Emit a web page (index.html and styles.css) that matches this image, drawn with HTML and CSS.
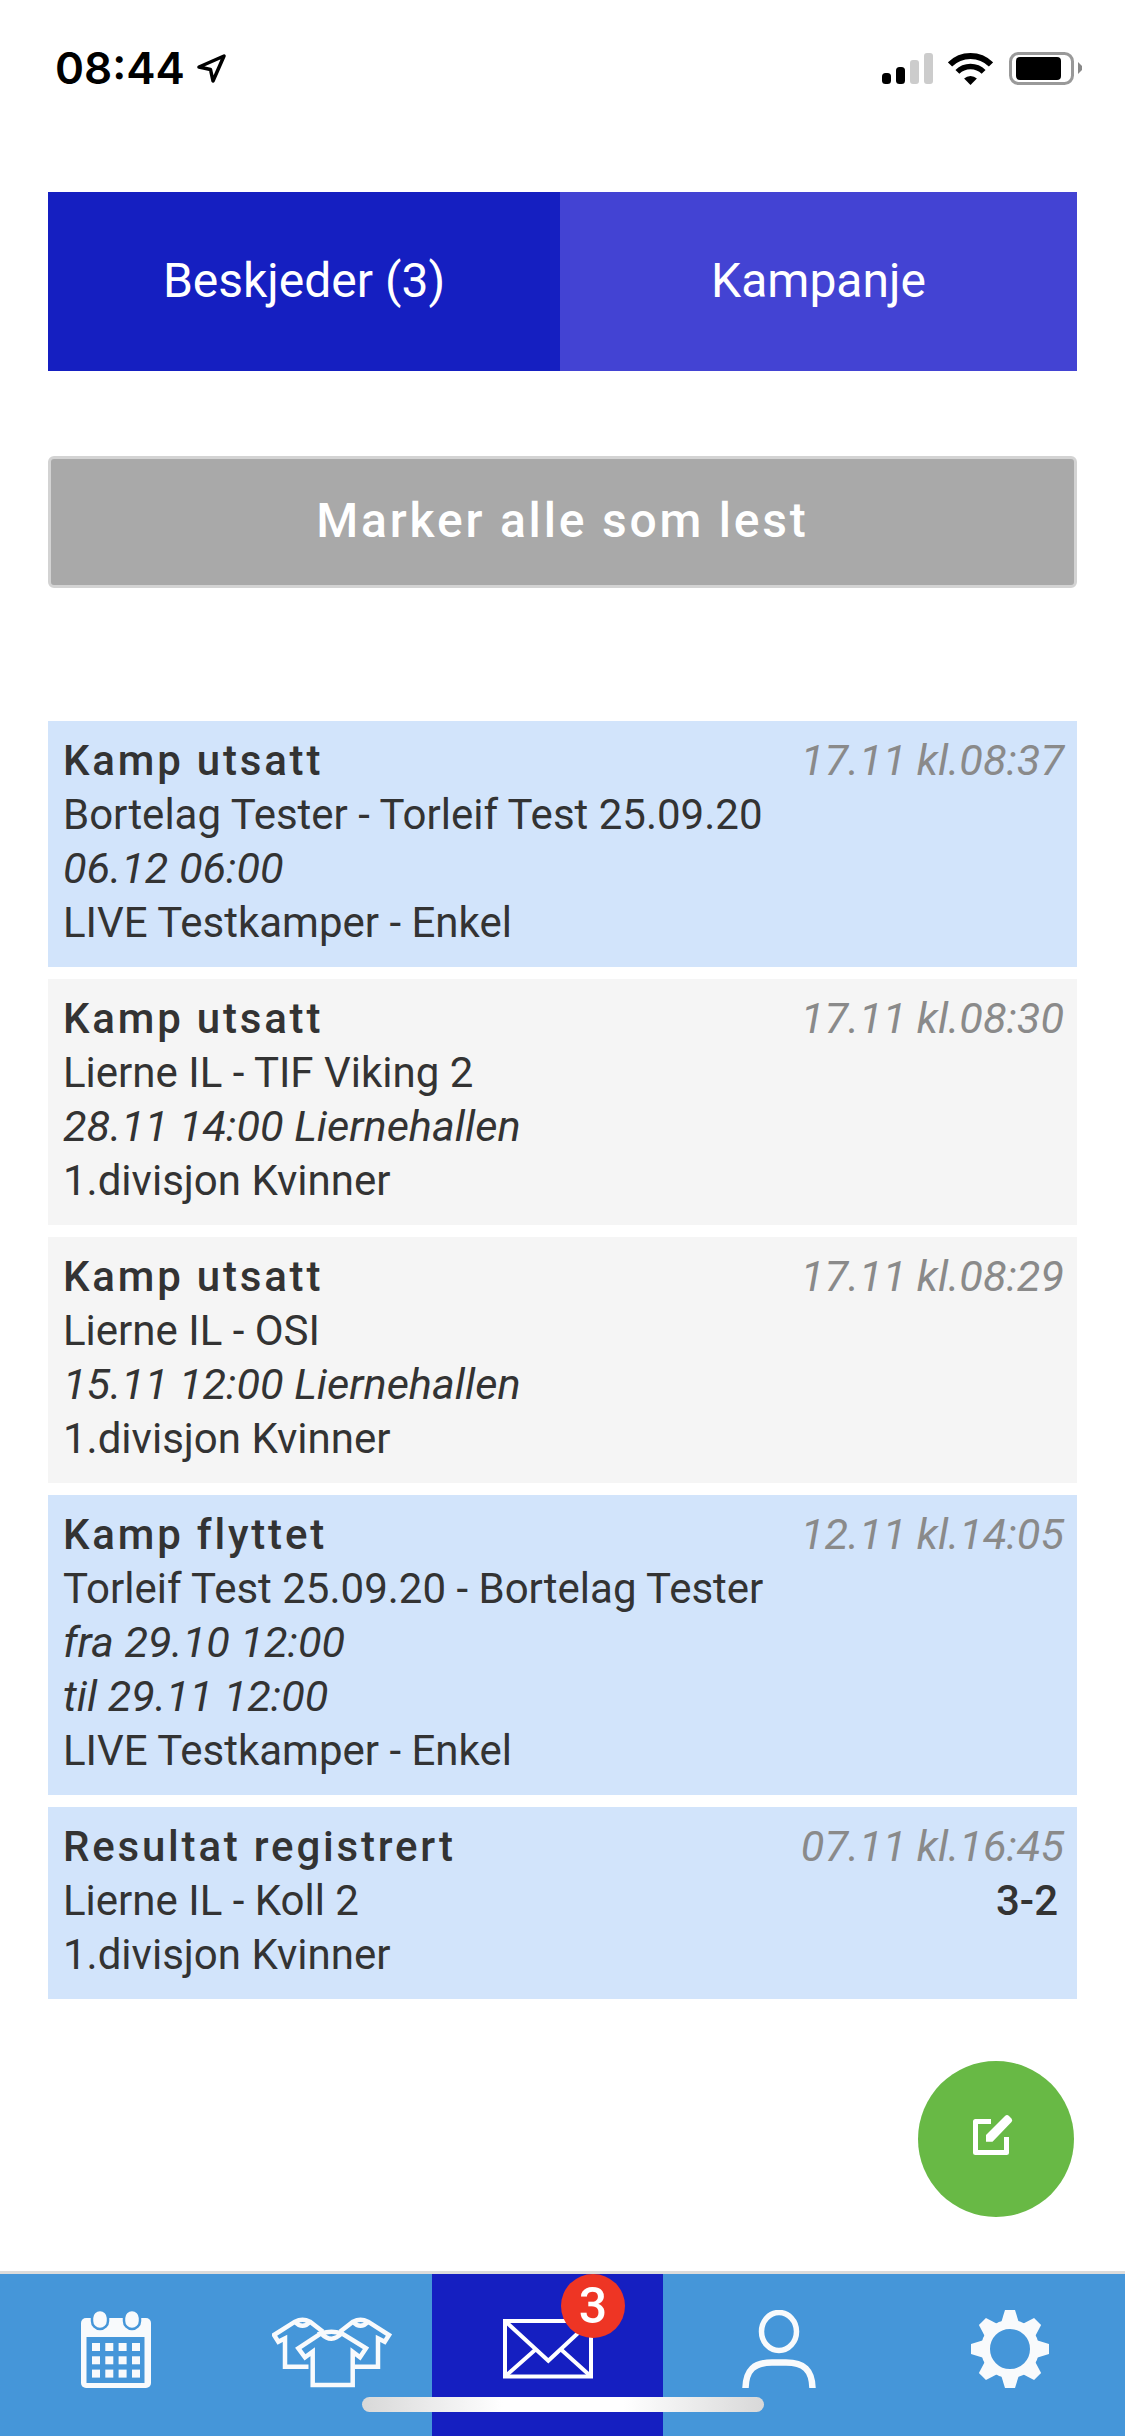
FILE: index.html
```html
<!DOCTYPE html>
<html lang="no">
<head>
    <meta charset="UTF-8">
    <meta name="viewport" content="width=device-width, initial-scale=1.0">
    <title>Beskjeder</title>
    <link rel="stylesheet" href="styles.css">
</head>
<body>
    <div class="statusbar">
        <span class="clock">08:44</span>
        <svg class="loc-arrow" width="29" height="29" viewBox="0 0 29 29">
            <path d="M2 13 L27 2 L16 27 L13.5 15.5 Z" fill="none" stroke="#000" stroke-width="3.5" stroke-linejoin="round"/>
        </svg>
        <svg class="signal" width="51" height="31" viewBox="0 0 51 31">
            <rect x="0" y="20" width="9" height="11" rx="3.5" fill="#000"/>
            <rect x="14" y="14" width="9" height="17" rx="3.5" fill="#000"/>
            <rect x="28" y="7" width="9" height="24" rx="3" fill="#ccc"/>
            <rect x="42" y="0" width="9" height="31" rx="3" fill="#ccc"/>
        </svg>
        <svg class="wifi" width="45" height="32" viewBox="0 0 45 32">
            <path d="M2 11.5 A29 29 0 0 1 43 11.5" fill="none" stroke="#000" stroke-width="6"/>
            <path d="M9.4 18.9 A18.5 18.5 0 0 1 35.6 18.9" fill="none" stroke="#000" stroke-width="5.5"/>
            <path d="M22.5 32 L16.1 25.6 A9 9 0 0 1 28.9 25.6 Z" fill="#000"/>
        </svg>
        <svg class="battery" width="73" height="33" viewBox="0 0 73 33">
            <rect x="1.5" y="1.5" width="62" height="30" rx="8" fill="none" stroke="#999" stroke-width="3"/>
            <rect x="7" y="5" width="45" height="23" rx="4" fill="#000"/>
            <path d="M69 10 L73 14 V18 L69 22 Z" fill="#888"/>
        </svg>
    </div>

    <div class="content">
        <div class="tabs">
            <div class="tab tab-active">Beskjeder (3)</div>
            <div class="tab">Kampanje</div>
        </div>

        <button class="mark-read">Marker alle som lest</button>

        <div class="messages">
            <div class="msg msg-unread">
                <div class="msg-text">
                    <div class="msg-title">Kamp utsatt</div>
                    <div>Bortelag Tester - Torleif Test 25.09.20</div>
                    <div class="msg-when">06.12 06:00</div>
                    <div>LIVE Testkamper - Enkel</div>
                </div>
                <div class="msg-side"><div class="msg-time">17.11 kl.08:37</div></div>
            </div>
            <div class="msg">
                <div class="msg-text">
                    <div class="msg-title">Kamp utsatt</div>
                    <div>Lierne IL - TIF Viking 2</div>
                    <div class="msg-when">28.11 14:00 Liernehallen</div>
                    <div>1.divisjon Kvinner</div>
                </div>
                <div class="msg-side"><div class="msg-time">17.11 kl.08:30</div></div>
            </div>
            <div class="msg">
                <div class="msg-text">
                    <div class="msg-title">Kamp utsatt</div>
                    <div>Lierne IL - OSI</div>
                    <div class="msg-when">15.11 12:00 Liernehallen</div>
                    <div>1.divisjon Kvinner</div>
                </div>
                <div class="msg-side"><div class="msg-time">17.11 kl.08:29</div></div>
            </div>
            <div class="msg msg-unread">
                <div class="msg-text">
                    <div class="msg-title">Kamp flyttet</div>
                    <div>Torleif Test 25.09.20 - Bortelag Tester</div>
                    <div class="msg-when">fra 29.10 12:00</div>
                    <div class="msg-when">til 29.11 12:00</div>
                    <div>LIVE Testkamper - Enkel</div>
                </div>
                <div class="msg-side"><div class="msg-time">12.11 kl.14:05</div></div>
            </div>
            <div class="msg msg-unread">
                <div class="msg-text">
                    <div class="msg-title">Resultat registrert</div>
                    <div>Lierne IL - Koll 2</div>
                    <div>1.divisjon Kvinner</div>
                </div>
                <div class="msg-side">
                    <div class="msg-time">07.11 kl.16:45</div>
                    <div class="msg-score">3-2</div>
                </div>
            </div>
        </div>
    </div>

    <div class="fab">
        <svg width="42" height="44" viewBox="0 0 42 44">
            <path d="M18 8.5 H2.5 V39.5 H33.5 V24" fill="none" stroke="#fff" stroke-width="5" stroke-linejoin="round"/>
            <path d="M13 22 L32 3 Q34 1 36 3 L38.5 5.5 Q40 7.5 38.5 9 L19.5 28.7 H13 Z" fill="#fff"/>
        </svg>
    </div>

    <nav class="tabbar">
        <div class="nav-item">
            <svg width="70" height="78" viewBox="0 0 70 78">
                <rect x="0" y="8" width="70" height="70" rx="5" fill="#f8fafc"/>
                <rect x="11" y="0" width="16" height="19" rx="8" fill="#f8fafc" stroke="#4596d9" stroke-width="2.5"/>
                <rect x="43" y="0" width="16" height="19" rx="8" fill="#f8fafc" stroke="#4596d9" stroke-width="2.5"/>
                <rect x="5.5" y="27" width="58" height="46" fill="#4596d9"/>
                <g fill="#f8fafc">
                    <rect x="11" y="33" width="8" height="8"/><rect x="24.3" y="33" width="8" height="8"/><rect x="37.6" y="33" width="8" height="8"/><rect x="51" y="33" width="8" height="8"/>
                    <rect x="11" y="46.3" width="8" height="8"/><rect x="24.3" y="46.3" width="8" height="8"/><rect x="37.6" y="46.3" width="8" height="8"/><rect x="51" y="46.3" width="8" height="8"/>
                    <rect x="11" y="59.6" width="8" height="8"/><rect x="24.3" y="59.6" width="8" height="8"/><rect x="37.6" y="59.6" width="8" height="8"/><rect x="51" y="59.6" width="8" height="8"/>
                </g>
            </svg>
        </div>
        <div class="nav-item">
            <svg width="120" height="78" viewBox="0 0 120 78">
                <g fill="none" stroke="#f8fafc" stroke-width="4.5">
                    <path d="M36.5 56.7 H13 V28.3 L6.3 31.7 L2 25 L23 11.7 Q30.5 8 38 11.7 L51 21.7 M23 11.7 Q30.5 20 38 11.7"/>
                    <path d="M82.5 56.7 H106 V28.3 L112.7 31.7 L117 25 L96 11.7 Q88.5 8 81 11.7 L68 21.7 M96 11.7 Q88.5 20 81 11.7"/>
                    <path d="M49 23.3 L26.3 38.3 L33 47.3 L40.7 41.7 V75 H80.7 V41.7 L88 47.3 L94 38.3 L69.7 23.3 Q59.5 20 49 23.3 Q59.5 34 69.7 23.3"/>
                </g>
            </svg>
        </div>
        <div class="nav-item nav-active">
            <svg width="90" height="78" viewBox="0 0 90 78">
                <g fill="none" stroke="#fff" stroke-width="4">
                    <rect x="2" y="11" width="86" height="55.5"/>
                    <path d="M2 11 L45.3 50.7 L88 11"/>
                    <path d="M2 66.5 L32 40 M88 66.5 L58.6 40"/>
                </g>
            </svg>
            <span class="badge">3</span>
        </div>
        <div class="nav-item">
            <svg width="74" height="78" viewBox="0 0 74 78">
                <g fill="none" stroke="#f8fafc">
                    <ellipse cx="37" cy="21.5" rx="17.5" ry="19" stroke-width="5.5"/>
                    <path d="M3.5 78 C4 60 12 52.5 30 52.5 H44 C62 52.5 70 60 70.5 78" stroke-width="6.5"/>
                </g>
            </svg>
        </div>
        <div class="nav-item">
            <svg width="78" height="78" viewBox="0 0 78 78">
                <g fill="#f8fafc">
                    <path id="tooth" d="M34 0 H44 L48 13 H30 Z"/>
                    <use href="#tooth" transform="rotate(45 39 39)"/>
                    <use href="#tooth" transform="rotate(90 39 39)"/>
                    <use href="#tooth" transform="rotate(135 39 39)"/>
                    <use href="#tooth" transform="rotate(180 39 39)"/>
                    <use href="#tooth" transform="rotate(225 39 39)"/>
                    <use href="#tooth" transform="rotate(270 39 39)"/>
                    <use href="#tooth" transform="rotate(315 39 39)"/>
                </g>
                <circle cx="39" cy="39" r="24.5" fill="none" stroke="#f8fafc" stroke-width="9"/>
            </svg>
        </div>
    </nav>
    <div class="home-indicator"></div>
</body>
</html>
```

FILE: styles.css
```css
body {
    position: relative;
    display: flex;
    flex-direction: column;
    width: 1125px;
    height: 2436px;
    margin: 0;
    overflow: hidden;
    background-color: #fff;
    color: #333;
    font-family: Roboto, "Liberation Sans", sans-serif;
}
.statusbar {
    display: flex;
    align-items: center;
    height: 33px;
    padding: 52px 43px 107px 55px;
}
.clock {
    color: #000;
    font-family: Inter, sans-serif;
    font-size: 44px;
    font-weight: 600;
    line-height: 33px;
}
.loc-arrow {
    margin-left: 12px;
    margin-right: auto;
}
.signal {
    margin-right: 15px;
}
.wifi {
    margin-right: 16px;
}
.content {
    flex: 1;
    padding: 0 48px;
}
.tabs {
    display: flex;
    height: 179px;
}
.tab {
    display: flex;
    flex: 1;
    align-items: center;
    justify-content: center;
    padding-bottom: 2px;
    background-color: #4343d3;
    color: #fff;
    font-size: 48px;
}
.tab-active {
    flex: none;
    width: 512px;
    background-color: #151fc1;
}
.mark-read {
    display: block;
    box-sizing: border-box;
    width: 100%;
    height: 132px;
    margin-top: 85px;
    padding-bottom: 4px;
    border: 3px solid #d3d3d3;
    border-radius: 6px;
    background-color: #a9a9a9;
    color: #fff;
    font-family: inherit;
    font-size: 48px;
    font-weight: 500;
    letter-spacing: 2.8px;
}
.messages {
    display: flex;
    flex-direction: column;
    gap: 12px;
    margin-top: 133px;
}
.msg {
    display: flex;
    justify-content: space-between;
    padding: 13px 13px 17px 15px;
    background-color: #f5f5f5;
    font-size: 42px;
    line-height: 54px;
}
.msg-unread {
    background-color: #d2e4fb;
}
.msg-title {
    font-weight: 500;
    letter-spacing: 2.8px;
}
.msg-when {
    font-size: 43.25px;
    font-style: italic;
}
.msg-side {
    text-align: right;
}
.msg-time {
    color: #8a8a8a;
    font-size: 43.25px;
    font-style: italic;
}
.msg-score {
    padding-right: 6px;
    font-weight: 500;
}
.fab {
    position: absolute;
    top: 2061px;
    left: 918px;
    display: flex;
    align-items: center;
    justify-content: center;
    box-sizing: border-box;
    width: 156px;
    height: 156px;
    padding: 0 4px 8px 0;
    border-radius: 50%;
    background-color: #68b945;
}
.tabbar {
    display: grid;
    grid-template-columns: 231px 201px 231px 231px 231px;
    height: 162px;
    border-top: 3px solid #dcdcdc;
    background-color: #4596d9;
}
.nav-item {
    position: relative;
    display: flex;
    justify-content: center;
    padding-top: 36px;
}
.nav-active {
    background-color: #151fc1;
}
.badge {
    position: absolute;
    top: 0;
    left: 129px;
    width: 64px;
    height: 64px;
    border-radius: 50%;
    background-color: #ee3524;
    color: #fff;
    font-size: 50px;
    font-weight: 500;
    line-height: 64px;
    text-align: center;
}
.home-indicator {
    position: absolute;
    top: 2397px;
    left: 362px;
    width: 402px;
    height: 15px;
    border-radius: 8px;
    background: linear-gradient(to right, #d8d8d8 0%, #fff 35%, #fff 65%, #d8d8d8 100%);
}
```
